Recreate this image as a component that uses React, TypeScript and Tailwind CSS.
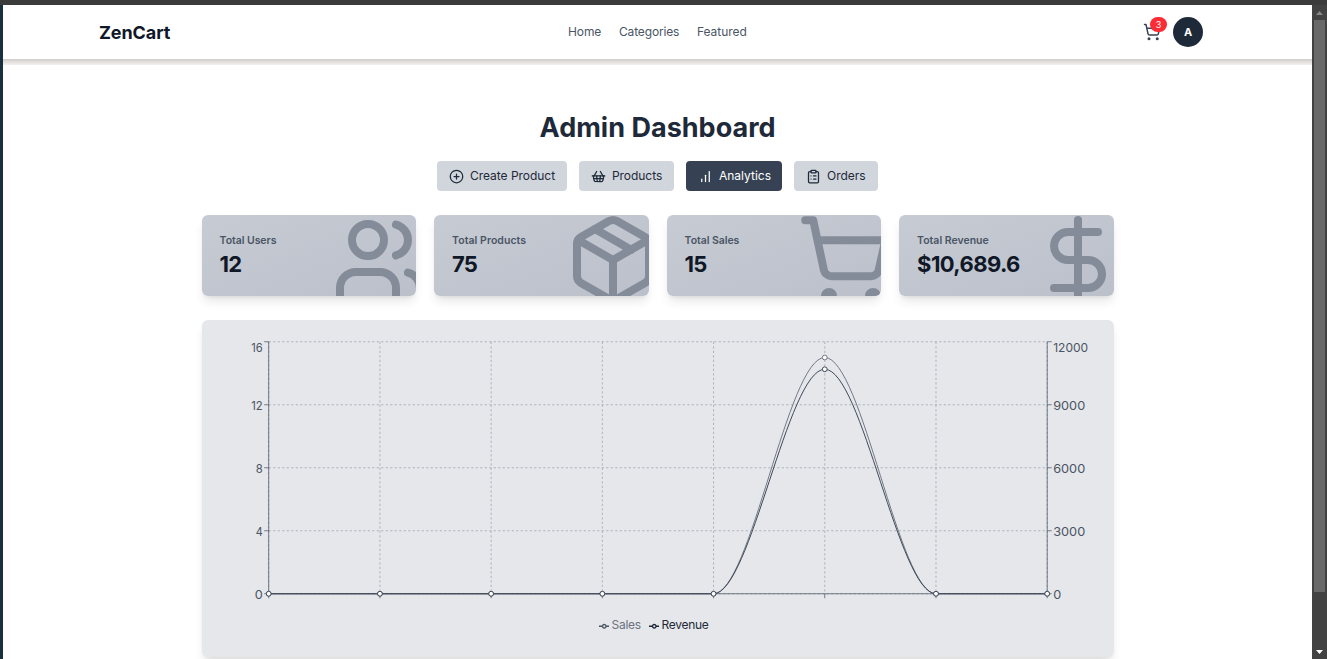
import {
  CirclePlus,
  ClipboardList,
  DollarSign,
  Package,
  ShoppingBasket,
  ShoppingCart,
  Users,
  type LucideIcon,
} from "lucide-react";
import type { ReactNode } from "react";

function BarsIcon() {
  return (
    <svg width="15" height="15" viewBox="0 0 24 24" fill="none" stroke="currentColor" strokeWidth="2" strokeLinecap="round">
      <path d="M12 20V10" />
      <path d="M18 20V4" />
      <path d="M6 20v-4" />
    </svg>
  );
}

function Header() {
  return (
    <header className="flex h-[54px] shrink-0 items-center justify-between bg-white pl-[96px] pr-[109px]">
      <div className="w-[200px] pt-px text-[18px] font-bold leading-6 text-gray-900">
        <span className="tracking-[-0.1px]">ZenCart</span>
      </div>
      <nav className="mr-[127px] flex gap-[18px] text-[12px] leading-[18px] text-gray-600">
        <a className="w-[33px] whitespace-nowrap tracking-[-0.1px]">Home</a>
        <a className="w-[60px] whitespace-nowrap tracking-[-0.15px]">Categories</a>
        <a className="w-[50px] whitespace-nowrap tracking-[-0.05px]">Featured</a>
      </nav>
      <div className="flex items-center gap-3">
        <div className="relative text-gray-700">
          <ShoppingCart size={18} />
          <span className="absolute -top-[6px] left-[7px] flex h-[15px] w-[17px] items-center justify-center rounded-full bg-[#fb2c36] text-[9px] text-white">
            3
          </span>
        </div>
        <div className="flex h-[30px] w-[30px] items-center justify-center rounded-full bg-gray-800 text-[11px] font-bold text-white">
          A
        </div>
      </div>
    </header>
  );
}

function Tab({ icon, label, className }: { icon: ReactNode; label: string; className: string }) {
  return (
    <button className={`flex h-[30px] items-center gap-[6.4px] whitespace-nowrap rounded-[4px] pl-3 text-[12px] ${className}`}>
      {icon}
      <span>{label}</span>
    </button>
  );
}

function StatCard({ title, value, Icon, valueClass, titleClass }: { title: string; value: string; Icon: LucideIcon; valueClass: string; titleClass: string }) {
  return (
    <div className="relative h-[81px] overflow-hidden rounded-[6px] bg-linear-to-br from-[#c7cbd3] to-[#bbc0cb] px-[18px] pt-[18px] shadow-[0_7px_11px_-2px_rgba(0,0,0,0.1),0_3px_5px_-3px_rgba(0,0,0,0.1)]">
      <p className={`text-[10.5px] font-semibold leading-[15px] text-gray-600 ${titleClass}`}>{title}</p>
      <p className={`mt-[3px] text-[22px] font-bold leading-[27px] text-gray-900 ${valueClass}`}>{value}</p>
      <Icon size={96} className="absolute -bottom-3 -right-3 text-[#858c99]" />
    </div>
  );
}

const LEFT = 66.7;
const RIGHT = 845.2;
const TOP = 22;
const BOTTOM = 274;
const STEP = (RIGHT - LEFT) / 7;
const columns = Array.from({ length: 8 }, (_, i) => LEFT + i * STEP);
const rows = [0, 1, 2, 3, 4].map((i) => BOTTOM - i * 63);
const sales = [0, 0, 0, 0, 0, 15, 0, 0].map((v) => BOTTOM - (v / 16) * (BOTTOM - TOP));
const revenue = [0, 0, 0, 0, 0, 10689.6, 0, 0].map((v) => BOTTOM - (v / 12000) * (BOTTOM - TOP));

function curve(ys: number[]) {
  return ys
    .map((y, i) =>
      i === 0
        ? `M${columns[0]},${y}`
        : `C${columns[i - 1] + STEP / 3},${ys[i - 1]} ${columns[i] - STEP / 3},${y} ${columns[i]},${y}`,
    )
    .join("");
}

function Series({ ys, color }: { ys: number[]; color: string }) {
  return (
    <g stroke={color} strokeWidth="0.95">
      <path d={curve(ys)} fill="none" />
      {ys.map((y, i) => (
        <circle key={i} cx={columns[i]} cy={y} r="2.4" fill="#fff" />
      ))}
    </g>
  );
}

const leftWidths = [8, 7, 7, 11.5, 11.5];
const rightWidths = [8, 32, 32, 32, 35];

function Chart() {
  return (
    <svg width="912" height="290" viewBox="0 0 912 290" className="block">
      <g transform="translate(0 -0.25)">
        <g stroke="#9ca3af" strokeWidth="0.75" strokeDasharray="2.25 2.25">
          {rows.map((y) => (
            <line key={y} x1={LEFT} x2={RIGHT} y1={y} y2={y} />
          ))}
          {columns.map((x) => (
            <line key={x} x1={x} x2={x} y1={TOP} y2={BOTTOM} />
          ))}
        </g>
        <g stroke="#4b5563" strokeWidth="0.75">
          <path d={`M${LEFT},${TOP}V${BOTTOM}H${RIGHT}V${TOP}`} fill="none" />
          {rows.map((y) => (
            <path key={y} d={`M${LEFT - 4.5},${y}H${LEFT}M${RIGHT},${y}h4.5`} />
          ))}
          {columns.map((x) => (
            <line key={x} x1={x} x2={x} y1={BOTTOM} y2={BOTTOM + 4.5} />
          ))}
        </g>
        <g fill="#4b5563" fontSize="12">
          {rows.map((y, i) => (
            <g key={y}>
              <text x={LEFT - 6 - leftWidths[i]} y={i === 4 ? y + 9.8 : y + 4.8} textLength={leftWidths[i]} lengthAdjust="spacingAndGlyphs">
                {i * 4}
              </text>
              <text x={RIGHT + 6} y={i === 4 ? y + 9.8 : y + 4.8} textLength={rightWidths[i]} lengthAdjust="spacingAndGlyphs">
                {i * 3000}
              </text>
            </g>
          ))}
        </g>
        <Series ys={sales} color="#6b7280" />
        <Series ys={revenue} color="#374151" />
      </g>
    </svg>
  );
}

function LegendItem({ label, color, textClass }: { label: string; color: string; textClass: string }) {
  return (
    <span className={`flex items-center gap-[2.5px] whitespace-nowrap ${textClass}`}>
      <svg width="10.5" height="10.5" viewBox="0 0 32 32" fill="none" stroke={color} strokeWidth="4" className="mt-[2px] shrink-0">
        <path d="M0,16h10.67A5.33,5.33,0,1,1,21.33,16H32M21.33,16A5.33,5.33,0,1,1,10.67,16" />
      </svg>
      {label}
    </span>
  );
}

function Scrollbar() {
  return (
    <div className="flex w-[15px] shrink-0 flex-col items-center bg-[#424242]">
      <div className="flex h-[15px] items-center">
        <svg width="7" height="4"><path d="M3.5 0L7 4H0Z" fill="#868686" /></svg>
      </div>
      <div className="h-[572px] w-[11px] bg-[#696969]" />
      <div className="mt-auto flex h-[15px] items-center">
        <svg width="7" height="4"><path d="M0 0H7L3.5 4Z" fill="#fff" /></svg>
      </div>
    </div>
  );
}

export default function App() {
  return (
    <div className="flex h-[659px] w-[1327px] flex-col overflow-hidden bg-white font-['Inter','DejaVu_Sans',sans-serif]">
      <div className="h-[5px] shrink-0 bg-[#3b3b3b]" />
      <div className="flex min-h-0 flex-1">
        <div className="w-[3px] shrink-0 bg-[#183040]" />
        <div className="flex min-w-0 flex-1 flex-col">
          <Header />
          <div className="h-[6px] shrink-0 bg-linear-to-b from-[#d0cdcb] to-[#f5f1ee]" />
          <main className="flex flex-1 flex-col pl-[198.6px]">
            <h1 className="mt-[45px] w-[912px] text-center text-[27px] font-bold leading-[36px] text-gray-800">
              <span className="tracking-[0.02px]">Admin Dashboard</span>
            </h1>
            <div className="mt-[15px] flex w-[911px] justify-center gap-3">
              <Tab icon={<CirclePlus size={15} />} label="Create Product" className="w-[130px] bg-gray-300 text-gray-800 tracking-[-0.03px]" />
              <Tab icon={<ShoppingBasket size={15} />} label="Products" className="w-[95px] bg-gray-300 text-gray-800 tracking-[-0.05px]" />
              <Tab icon={<BarsIcon />} label="Analytics" className="w-[96px] bg-gray-700 text-white" />
              <Tab icon={<ClipboardList size={15} />} label="Orders" className="w-[84px] bg-gray-300 text-gray-800" />
            </div>
            <div className="mt-6 grid w-[912px] grid-cols-4 gap-[18px]">
              <StatCard title="Total Users" value="12" Icon={Users} titleClass="tracking-[-0.05px]" valueClass="tracking-[-0.8px]" />
              <StatCard title="Total Products" value="75" Icon={Package} titleClass="tracking-[0.05px]" valueClass="tracking-[-0.8px]" />
              <StatCard title="Total Sales" value="15" Icon={ShoppingCart} titleClass="tracking-[-0.05px]" valueClass="tracking-[-0.8px]" />
              <StatCard title="Total Revenue" value="$10,689.6" Icon={DollarSign} titleClass="tracking-[0px]" valueClass="tracking-[-0.6px]" />
            </div>
            <section className="mt-6 h-[337px] w-[912px] shrink-0 rounded-[6px] bg-gray-200 shadow-[0_7px_11px_-2px_rgba(0,0,0,0.1),0_3px_5px_-3px_rgba(0,0,0,0.1)]">
              <Chart />
              <div className="mt-[6px] flex justify-center gap-2 pr-[8px] text-[12px] leading-[18px]">
                <LegendItem label="Sales" color="#4b5563" textClass="w-[42px] tracking-[-0.3px] text-[#6b7280]" />
                <LegendItem label="Revenue" color="#1f2937" textClass="w-[60px] tracking-[-0.3px] text-[#1f2937]" />
              </div>
            </section>
          </main>
        </div>
        <Scrollbar />
      </div>
    </div>
  );
}
